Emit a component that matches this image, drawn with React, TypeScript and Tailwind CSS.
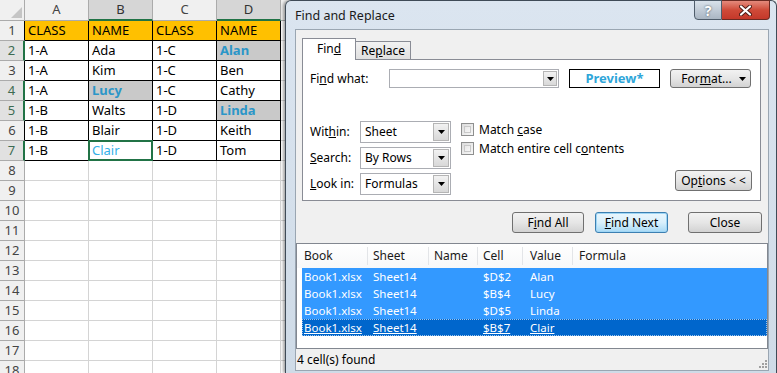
import React from 'react';

const cols = ['A', 'B', 'C', 'D'];
const data = [
  ['CLASS', 'NAME', 'CLASS', 'NAME'],
  ['1-A', 'Ada', '1-C', 'Alan'],
  ['1-A', 'Kim', '1-C', 'Ben'],
  ['1-A', 'Lucy', '1-C', 'Cathy'],
  ['1-B', 'Walts', '1-D', 'Linda'],
  ['1-B', 'Blair', '1-D', 'Keith'],
  ['1-B', 'Clair', '1-D', 'Tom'],
];
const found = ['1-3', '3-1', '4-3'];
const selRows = [2, 4, 5, 7];
const selCols = [1, 3];

const results = [
  { cell: '$D$2', value: 'Alan' },
  { cell: '$B$4', value: 'Lucy' },
  { cell: '$D$5', value: 'Linda' },
  { cell: '$B$7', value: 'Clair' },
];

const Arrow = () => (
  <svg width="7" height="4" viewBox="0 0 7 4">
    <path d="M0 0h7L3.5 4z" fill="#000" />
  </svg>
);

// excel sheet behind the dialog
const Sheet = () => (
  <div className="flex flex-col font-['Noto_Sans','Liberation_Sans',sans-serif] text-[13px] text-black">
    <div className="flex h-[21px]">
      <div className="relative w-[25px] shrink-0 border-r border-b border-[#ababab] bg-[#f0f0f0]">
        <svg className="absolute right-[2px] bottom-[2px]" width="11" height="11" viewBox="0 0 11 11">
          <path d="M11 0v11H0z" fill="#c5c5c5" />
        </svg>
      </div>
      {cols.map((c, i) =>
        selCols.includes(i) ? (
          <div key={c} className="flex w-[64px] shrink-0 items-center justify-center border-r border-b-2 border-r-[#ababab] border-b-[#217346] bg-[#d6d6d6] text-[#333]">
            {c}
          </div>
        ) : (
          <div key={c} className="flex w-[64px] shrink-0 items-center justify-center border-r border-b border-[#ababab] bg-[#f0f0f0] text-[#444]">
            {c}
          </div>
        )
      )}
      <div className="flex-1 border-b border-[#ababab] bg-[#f0f0f0]" />
    </div>
    {Array.from({ length: 18 }).map((_, r) => {
      const rowNo = r + 1;
      const inTable = r < 7;
      const sel = selRows.includes(rowNo);
      return (
        <div key={r} className="flex h-[20px] shrink-0">
          {sel ? (
            <div className="flex w-[25px] shrink-0 items-center justify-center border-r-2 border-b border-r-[#217346] border-b-[#ababab] bg-[#e1e1e1] text-[#3d6b52]">
              {rowNo}
            </div>
          ) : inTable ? (
            <div className="flex w-[25px] shrink-0 items-center justify-center border-r border-b border-r-black border-b-[#ababab] bg-[#f0f0f0] text-[#444]">
              {rowNo}
            </div>
          ) : (
            <div className="flex w-[25px] shrink-0 items-center justify-center border-r border-b border-[#ababab] bg-[#f0f0f0] text-[#444]">
              {rowNo}
            </div>
          )}
          {cols.map((c, ci) => {
            if (!inTable) {
              return <div key={c} className="w-[64px] shrink-0 border-r border-b border-[#d4d4d4]" />;
            }
            const text = data[r][ci];
            const isFound = found.includes(`${r}-${ci}`);
            const active = r === 6 && ci === 1;
            if (r === 0) {
              return (
                <div key={c} className="flex w-[64px] shrink-0 items-center border-r border-b border-black bg-[#ffc000] pl-[3px]">
                  {text}
                </div>
              );
            }
            if (isFound) {
              return (
                <div key={c} className="flex w-[64px] shrink-0 items-center border-r border-b border-black bg-[#c9c9c9] pl-[3px] font-bold text-[#2b96c8]">
                  {text}
                </div>
              );
            }
            if (active) {
              return (
                <div key={c} className="relative flex w-[64px] shrink-0 items-center border-r border-b border-black pl-[3px] text-[#33b0e8]">
                  {text}
                  <div className="absolute -top-px -left-px -right-px -bottom-px border-2 border-[#217346]" />
                </div>
              );
            }
            return (
              <div key={c} className="flex w-[64px] shrink-0 items-center border-r border-b border-black pl-[3px]">
                {text}
              </div>
            );
          })}
          <div className="flex-1 border-b border-[#d4d4d4]" />
        </div>
      );
    })}
  </div>
);

const Combo = ({ value }: { value: string }) => (
  <div className="flex h-[22px] w-[91px] items-stretch border border-[#abadb3] bg-white p-[1px]">
    <div className="flex flex-1 items-center pl-[3px]">{value}</div>
    <div className="flex w-[16px] items-center justify-center border border-[#b5b5b5] bg-linear-to-b from-[#f2f2f2] to-[#d8d8d8]">
      <Arrow />
    </div>
  </div>
);

const Check = ({ children }: { children: React.ReactNode }) => (
  <div className="flex h-[13px] items-center">
    <div className="mr-[5px] h-[13px] w-[13px] border border-[#8e8f8f] bg-linear-to-br from-[#dcdcdc] to-[#f8f8f8] p-[2px]">
      <div className="h-full w-full border border-[#c8c8c8] bg-linear-to-br from-[#e8e8e8] to-[#f6f6f6]" />
    </div>
    <span>{children}</span>
  </div>
);

const btn =
  'flex items-center justify-center rounded-[3px] border border-[#707070] bg-linear-to-b from-[#f2f2f2] via-[#e6e6e6] to-[#d2d2d2]';

const Dialog = () => (
  <div className="absolute top-0 left-[285px] flex h-[373px] w-[492px] flex-col rounded-t-[6px] border border-b-0 border-[#3f4b57] bg-linear-to-b from-[#dbe5f0] to-[#cfdbe7] font-['Noto_Sans','Liberation_Sans',sans-serif] text-[12px] text-black shadow-[-2px_0_3px_rgba(0,0,0,0.35)]">
    {/* title bar */}
    <div className="relative flex h-[28px] shrink-0 items-center pt-[2px] pl-[9px]">
      <span className="text-[12.5px] text-[#1a1a1a]">Find and Replace</span>
      <div className="absolute top-[-1px] right-[6px] flex h-[20px]">
        <div className="flex w-[28px] items-center justify-center rounded-bl-[4px] border border-[#4f5d6b] bg-linear-to-b from-[#d9e2eb] to-[#aab6c3] text-[14px] font-bold text-white [text-shadow:0_0_2px_#33404c]">
          ?
        </div>
        <div className="flex w-[48px] items-center justify-center rounded-br-[4px] border border-l-0 border-[#6b2a22] bg-linear-to-b from-[#e48a7c] via-[#cf4a38] to-[#c4382a]">
          <svg width="13" height="11" viewBox="0 0 13 11">
            <path d="M2 1.5l9 8M11 1.5l-9 8" stroke="#4a1a14" strokeWidth="4" strokeLinecap="round" />
            <path d="M2 1.5l9 8M11 1.5l-9 8" stroke="#fff" strokeWidth="2.2" strokeLinecap="round" />
          </svg>
        </div>
      </div>
    </div>

    {/* client area */}
    <div className="ml-[9px] mr-[7px] flex h-[342px] flex-col border border-[#9aa6b2] bg-[#f0f0f0]">
      {/* tabs */}
      <div className="flex h-[29px] shrink-0 items-end pl-[6px]">
        <div className="relative z-10 -mb-px flex h-[22px] w-[54px] items-center justify-center border border-b-0 border-[#898c95] bg-white pb-[2px]">
          Fin<span className="underline">d</span>
        </div>
        <div className="flex h-[18px] w-[55px] items-center justify-center border border-b-0 border-l-0 border-[#898c95] bg-linear-to-b from-[#f2f2f2] to-[#e0e0e0]">
          Re<span className="underline">p</span>lace
        </div>
      </div>

      {/* tab panel */}
      <div className="ml-[6px] mr-[7px] flex h-[142px] shrink-0 flex-col border border-[#898c95] bg-white px-[7px]">
        <div className="mt-[9px] flex h-[19px] items-center">
          <span className="w-[79px]">
            Fi<span className="underline">n</span>d what:
          </span>
          <div className="flex h-[19px] w-[170px] items-stretch border border-[#abadb3] bg-white p-[1px]">
            <div className="flex-1" />
            <div className="flex w-[14px] items-center justify-center border border-[#b5b5b5] bg-linear-to-b from-[#f2f2f2] to-[#d8d8d8]">
              <Arrow />
            </div>
          </div>
          <div className="ml-[10px] flex h-[19px] w-[91px] items-center justify-center border border-black text-[13px] font-bold text-[#2fa6d9]">
            Preview*
          </div>
          <div className={`${btn} relative ml-[10px] h-[19px] w-[81px] pr-[8px]`}>
            For<span className="underline">m</span>at...
            <span className="absolute right-[4px] top-[7px]">
              <Arrow />
            </span>
          </div>
        </div>

        <div className="mt-[33px] flex">
          <div className="flex flex-col gap-[4px]">
            <div className="flex items-center">
              <span className="w-[50px]">
                Wit<span className="underline">h</span>in:
              </span>
              <Combo value="Sheet" />
            </div>
            <div className="flex items-center">
              <span className="w-[50px]">
                <span className="underline">S</span>earch:
              </span>
              <Combo value="By Rows" />
            </div>
            <div className="flex items-center">
              <span className="w-[50px]">
                <span className="underline">L</span>ook in:
              </span>
              <Combo value="Formulas" />
            </div>
          </div>
          <div className="ml-[10px] flex flex-col gap-[6px] pt-[2px]">
            <Check>
              Match <span className="underline">c</span>ase
            </Check>
            <Check>
              Match entire cell c<span className="underline">o</span>ntents
            </Check>
          </div>
          <div className={`${btn} mr-px mb-[4px] ml-auto h-[21px] w-[77px] self-end`}>
            Op<span className="underline">t</span>ions &lt; &lt;
          </div>
        </div>
      </div>

      {/* action buttons */}
      <div className="mt-[11px] flex h-[21px] shrink-0 justify-end pr-[6px]">
        <div className={`${btn} w-[72px]`}>
          F<span className="underline">i</span>nd All
        </div>
        <div className="ml-[11px] flex w-[73px] items-center justify-center rounded-[3px] border border-[#3c7fb1] bg-linear-to-b from-[#eaf6fd] via-[#d9f0fc] to-[#a7d9f5] shadow-[inset_0_0_0_1px_#9fd6f5]">
          <span className="underline">F</span>ind Next
        </div>
        <div className={`${btn} ml-[20px] w-[74px]`}>Close</div>
      </div>

      {/* results list */}
      <div className="mt-[10px] flex h-[106px] shrink-0 flex-col border border-[#828790] bg-white text-[11.5px]">
        <div className="flex h-[24px] shrink-0 items-center bg-linear-to-b from-white to-[#f7f8f9] text-[12px] text-[#1a1a1a]">
          <div className="w-[71px] border-r border-[#e3e5e8] pl-[7px]">Book</div>
          <div className="w-[61px] border-r border-[#e3e5e8] pl-[5px]">Sheet</div>
          <div className="w-[49px] border-r border-[#e3e5e8] pl-[5px]">Name</div>
          <div className="w-[45px] border-r border-[#e3e5e8] pl-[5px]">Cell</div>
          <div className="w-[50px] border-r border-[#e3e5e8] pl-[7px]">Value</div>
          <div className="flex-1 pl-[6px]">Formula</div>
        </div>
        <div className="ml-[5px] flex flex-col">
          {results.map((row, i) => {
            const last = i === results.length - 1;
            return (
              <div
                key={row.cell}
                className={
                  last
                    ? 'flex h-[17px] items-center border border-dotted border-[#9bc4ee] bg-[#0066cc] text-white underline'
                    : 'flex h-[17px] items-center border border-transparent bg-[#3399ff] text-white'
                }
              >
                <div className="w-[65px] pl-px">Book1.xlsx</div>
                <div className="w-[61px] pl-[5px]">Sheet14</div>
                <div className="w-[49px]" />
                <div className="w-[45px] pl-[5px]">{row.cell}</div>
                <div className="w-[50px] pl-[7px]">{row.value}</div>
                <div className="flex-1" />
              </div>
            );
          })}
        </div>
      </div>

      {/* status bar */}
      <div className="relative flex flex-1 items-center pl-[1px]">
        4 cell(s) found
        <svg className="absolute right-[1px] bottom-[2px]" width="10" height="10" viewBox="0 0 10 10">
          <g fill="#a0a0a0">
            <rect x="8" y="2" width="2" height="2" />
            <rect x="5" y="5" width="2" height="2" />
            <rect x="8" y="5" width="2" height="2" />
            <rect x="2" y="8" width="2" height="2" />
            <rect x="5" y="8" width="2" height="2" />
            <rect x="8" y="8" width="2" height="2" />
          </g>
        </svg>
      </div>
    </div>
  </div>
);

export default function App() {
  return (
    <div className="relative h-[373px] w-[777px] overflow-hidden bg-white">
      <Sheet />
      <Dialog />
    </div>
  );
}
